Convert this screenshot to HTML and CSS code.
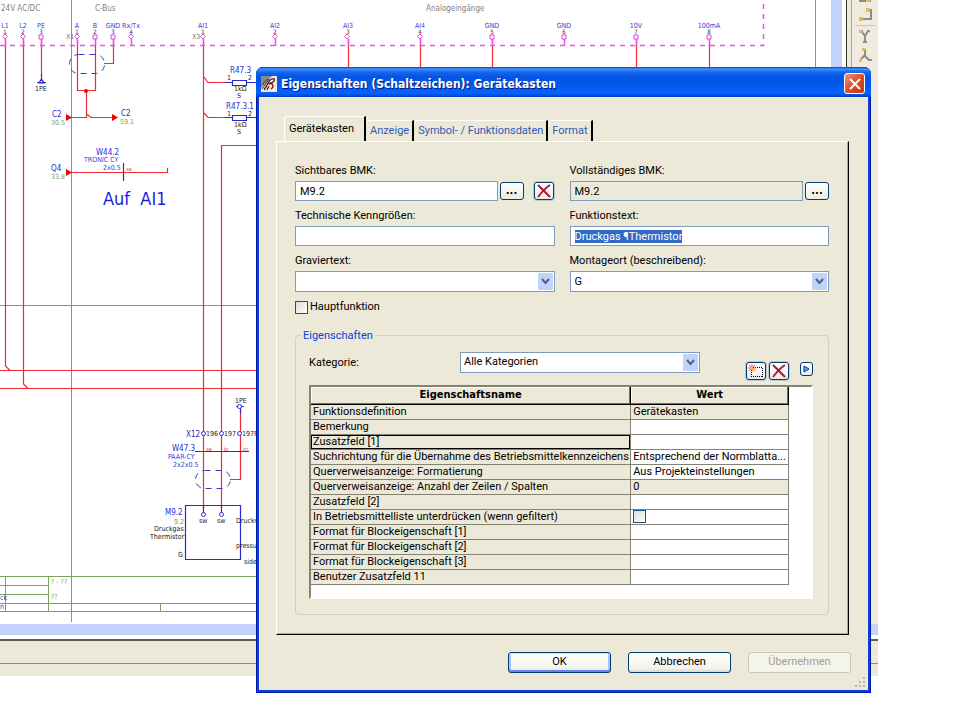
FILE: index.html
```
<!DOCTYPE html>
<html lang="de">
<head>
  <meta charset="UTF-8" />
  <meta name="viewport" content="width=device-width, initial-scale=1" />
  <title>Eigenschaften (Schaltzeichen): Gerätekasten</title>
  <link rel="stylesheet" href="styles.css">
</head>
<body>
  <div class="app">
    <div class="workspace">
      <svg class="schematic" width="831" height="624" viewBox="0 0 831 624">
        <!-- sheet frame and grid -->
        <path class="guide" d="M71.500 0V622M0 305.500H831" />
        <path class="frame" d="M815.500 0V576M0 576.500H815M0 585.500H48M0 594.500H48M0 603.500H815M0 611.500H815M5.500 576V611M48.500 576V611M160.500 603V611" />
        <text class="t-green" x="51" y="584">? - ??</text>
        <text class="t-green" x="51" y="599">??</text>
        <text class="t-blue" x="0" y="600">ck</text>
        <text class="t-blue" x="0" y="609">n</text>

        <!-- terminal strip -->
        <path class="strip" d="M0 45.500H763.500V0" />
        <g class="t-grey">
          <text x="1" y="11">24V AC/DC</text>
          <text x="95" y="11">C-Bus</text>
          <text x="426" y="11">Analogeingänge</text>
        </g>
        <g class="t-name">
          <text x="5" y="28">L1</text><text x="23" y="28">L2</text><text x="41" y="28">PE</text>
          <text x="77" y="28">A</text><text x="95" y="28">B</text><text x="113" y="28">GND</text><text x="131" y="28">Rx/Tx</text>
          <text x="203" y="28">AI1</text><text x="275" y="28">AI2</text><text x="348" y="28">AI3</text><text x="420" y="28">AI4</text>
          <text x="492" y="28">GND</text><text x="564" y="28">GND</text><text x="636" y="28">10V</text><text x="709" y="28">100mA</text>
        </g>
        <g class="t-no">
          <text x="5" y="34">1</text><text x="23" y="34">2</text><text x="41" y="34">3</text>
          <text x="77" y="34">1</text><text x="95" y="34">2</text><text x="113" y="34">3</text><text x="131" y="34">4</text>
          <text x="203" y="34">1</text><text x="275" y="34">2</text><text x="348" y="34">3</text><text x="420" y="34">4</text>
          <text x="492" y="34">5</text><text x="564" y="34">6</text><text x="636" y="34">7</text><text x="709" y="34">8</text>
        </g>
        <g class="t-strip">
          <text x="66" y="39">X1</text>
          <text x="192" y="39">X3</text>
        </g>

        <!-- wires -->
        <path class="wire" d="M5.500 39V366L10 370.500M0 370.500H831M23.500 39V384L28 388.500M0 388.500H831M41.500 39V75M77.500 39V91M95.500 39V91M77 90.500H96M86.500 90V117.500H66M86.500 114L91 117.500H113M113.500 39V63.500H104M67 172.500H167.500V168M203.500 39V508M204 77L208 82.500H229M204 113L208 117.500H229M221.500 508V145.500H270M348.500 39V70M420.500 39V70M492.500 39V70M636.500 39V70M709.500 39V70M240.500 410V479.500H230" />
        <path class="pin" d="M5.500 39V46M23.500 39V46M41.500 39V46M77.500 39V46M95.500 39V46M113.500 39V46M131.500 39V46M203.500 39V46M275.500 39V46M348.500 39V46M420.500 39V46M492.500 39V46M564.500 39V46M636.500 39V46M709.500 39V46" />
        <path class="pin-head" d="M5 34l2.500 2.500-2.500 2.500-2.500-2.500zM23 34l2.500 2.500-2.500 2.500-2.500-2.500zM39 35h4v4h-4zM77 34l2.500 2.500-2.500 2.500-2.500-2.500zM93 35h4v4h-4zM111 35h4v4h-4zM131 34l2.500 2.500-2.500 2.500-2.500-2.500zM203 34l2.500 2.500-2.500 2.500-2.500-2.500zM275 34l2.500 2.500-2.500 2.500-2.500-2.500zM347 34l2.500 2.500-2.500 2.500-2.500-2.500zM420 34l2.500 2.500-2.500 2.500-2.500-2.500zM490 35h4v4h-4zM562 35h4v4h-4zM634 35h4v4h-4zM707 35h4v4h-4z" />
        <path class="arrow" d="M66 114v7l6-3.500zM112 114v7l6-3.500zM66 169v7l6-3.500z" />
        <circle class="arrow" cx="86" cy="91" r="2" />

        <!-- shielded cables -->
        <rect class="shield" x="69.500" y="54.500" width="35" height="19" rx="9" />
        <rect class="shield" x="195.500" y="470.500" width="35" height="18" rx="9" />

        <!-- devices -->
        <path class="device" d="M41.500 74V81M37 82.500H46M39 83l2.500-4 2.500 4zM123.500 163V181M225 82.500H232M225 117.500H232M247 82.500H256M247 117.500H256M232.500 80.500h14v5h-14zM232.500 115.500h14v5h-14zM185.500 505.500h55v54h-55zM195 451.500H249M203.500 505V513M221.500 505V513M240.500 406V414M236 406.500H244" />
        <g class="node">
          <circle cx="203.500" cy="433.500" r="2" /><circle cx="221.500" cy="433.500" r="2" /><circle cx="239.500" cy="433.500" r="2" />
          <circle cx="203.500" cy="514.500" r="2" /><circle cx="221.500" cy="514.500" r="2" /><circle cx="239.500" cy="406.500" r="2" />
        </g>

        <g class="t-label">
          <text x="52" y="117">C2</text><text x="121" y="116">C2</text><text x="51" y="171">Q4</text>
          <text x="96" y="155">W44.2</text><text x="230" y="73">R47.3</text><text x="226" y="109">R47.3.1</text>
          <text x="172" y="451">W47.3</text><text x="186" y="437">X12</text><text x="165" y="515">M9.2</text>
        </g>
        <g class="t-green">
          <text x="51" y="125">30.5</text><text x="120" y="124">59.1</text><text x="51" y="179">33.8</text><text x="174" y="524">9.2</text>
        </g>
        <g class="t-blue">
          <text x="84" y="162">TRONIC CY</text><text x="103" y="170">2x0.5</text>
          <text x="168" y="459">PAAR-CY</text><text x="173" y="467">2x2x0.5</text>
        </g>
        <g class="t-red">
          <text x="126" y="171">sw</text><text x="206" y="451">sw</text><text x="224" y="451">br</text><text x="243" y="451">sh</text>
        </g>
        <g class="t-black">
          <text x="35" y="91">1PE</text><text x="235" y="403">1PE</text>
          <text x="227" y="80">1</text><text x="248" y="80">2</text><text x="227" y="116">1</text><text x="248" y="116">2</text>
          <text x="234" y="91">1kΩ</text><text x="237" y="98">S</text><text x="234" y="127">1kΩ</text><text x="237" y="134">S</text>
          <text x="206" y="436">196</text><text x="224" y="436">197</text><text x="242" y="436">197PE</text>
          <text x="199" y="523">sw</text><text x="217" y="523">sw</text>
          <text x="154" y="531">Druckgas</text><text x="150" y="539">Thermistor</text><text x="178" y="557">G</text>
          <text x="236" y="523">Drucks</text><text x="236" y="548">pressure</text><text x="244" y="564">side</text>
        </g>
        <text class="t-big" x="103" y="205" xml:space="preserve">Auf  AI1</text>
      </svg>
      <div class="scroll-v"></div>
      <div class="toolbar">
        <svg width="20" height="68" viewBox="0 0 20 68">
          <path class="tool-line" d="M4 1h12M8 19h8V10M12 10h5M4 31h4M7 32l3 4v6M15 31h-2l-3 5M8 42h4M7 50h3v6l4 4h3M10 55l-4 4" />
          <path class="tool-sep" d="M0 25.500h20" />
          <path class="tool-dot" d="M4 17h4v4h-4zM11 8h4v4h-4zM4 30h3v3h-3zM7 48h3v3h-3zM4 59h3v3h-3zM11 0h4v2h-4z" />
        </svg>
      </div>
    </div>
    <div class="scroll-h"></div>
    <div class="panel"></div>
    <div class="statusbar"></div>
  </div>

  <div class="dialog" role="dialog" aria-labelledby="title">
    <div class="titlebar">
      <svg class="app-icon" width="16" height="16" viewBox="0 0 16 16">
        <rect width="16" height="16" fill="#e9e4e2" />
        <path d="M0 0h11L0 12z" fill="#8a8a8a" />
        <path d="M2 15L9 4M9 5c4-3 6 0 3 2l-3 1c4 0 4 4 1 5M6 14l2-4" fill="none" stroke="#fff" stroke-width="3" />
        <path d="M1 13L8 3M2 9c1-4 4-6 6-5" fill="none" stroke="#333" />
        <path d="M3 14L9 4M9 4c4-3 6 0 3 2l-4 2c5-1 5 3 2 5M6 14l2-4" fill="none" stroke="#6d2222" stroke-width="1.500" />
      </svg>
      <h1 id="title">Eigenschaften (Schaltzeichen): Gerätekasten</h1>
      <button class="close" aria-label="Schließen">
        <svg width="12" height="12" viewBox="0 0 12 12"><path d="M1 1l10 10M11 1L1 11" stroke="#fff" stroke-width="2" /></svg>
      </button>
    </div>

    <div class="content">
      <div class="tabs" role="tablist">
        <button class="tab active" role="tab" aria-selected="true">Gerätekasten</button>
        <button class="tab" role="tab">Anzeige</button>
        <button class="tab" role="tab">Symbol- / Funktionsdaten</button>
        <button class="tab" role="tab">Format</button>
      </div>

      <div class="page">
        <div class="fields">
          <div class="field">
            <label for="bmk">Sichtbares BMK:</label>
            <div class="row">
              <input type="text" id="bmk" value="M9.2" />
              <button class="more" aria-label="Auswählen">...</button>
              <button class="tool" aria-label="Löschen">
                <svg width="16" height="14" viewBox="0 0 16 14"><path d="M2 1l12 12M14 1C9 4 5 9 2 13" fill="none" stroke="#b5123a" stroke-width="2" /></svg>
              </button>
            </div>
          </div>
          <div class="field">
            <label for="fullbmk">Vollständiges BMK:</label>
            <div class="row">
              <input type="text" id="fullbmk" class="readonly" value="M9.2" readonly />
              <button class="more" aria-label="Auswählen">...</button>
            </div>
          </div>
          <div class="field">
            <label for="tech">Technische Kenngrößen:</label>
            <input type="text" id="tech" />
          </div>
          <div class="field">
            <label for="func">Funktionstext:</label>
            <input type="text" id="func" value="Druckgas ¶Thermistor" autofocus />
          </div>
          <div class="field">
            <label for="engrave">Graviertext:</label>
            <select id="engrave"><option></option></select>
          </div>
          <div class="field">
            <label for="place">Montageort (beschreibend):</label>
            <select id="place"><option>G</option></select>
          </div>
        </div>
        <label class="check"><input type="checkbox" /> Hauptfunktion</label>

        <fieldset>
          <legend>Eigenschaften</legend>
          <div class="category">
            <label for="category">Kategorie:</label>
            <select id="category"><option>Alle Kategorien</option></select>
            <div class="actions">
              <button class="tool" aria-label="Neu">
                <svg width="16" height="14" viewBox="0 0 16 14">
                  <path d="M3 3.500h12M3 12.500h12M3.500 4v9M14.500 4v9" fill="none" stroke="#000" stroke-dasharray="1 1" />
                  <path d="M4 0v8M0 4h8M1 1l6 6M7 1L1 7" stroke="#f26522" />
                  <circle cx="4" cy="4" r="1" fill="#ffd23c" />
                </svg>
              </button>
              <button class="tool" aria-label="Löschen">
                <svg width="16" height="14" viewBox="0 0 16 14"><path d="M2 1l12 12M14 1C9 4 5 9 2 13" fill="none" stroke="#b5123a" stroke-width="2" /></svg>
              </button>
              <button class="expand" aria-label="Mehr">
                <svg width="7" height="8" viewBox="0 0 7 8"><path d="M1 1v6l5-3z" fill="#6aa5ff" stroke="#0d2f9c" /></svg>
              </button>
            </div>
          </div>
          <div class="list">
            <table>
              <thead>
                <tr><th class="name">Eigenschaftsname</th><th>Wert</th></tr>
              </thead>
              <tbody>
                <tr><td>Funktionsdefinition</td><td class="fixed">Gerätekasten</td></tr>
                <tr><td>Bemerkung</td><td></td></tr>
                <tr><td class="current">Zusatzfeld [1]</td><td></td></tr>
                <tr><td>Suchrichtung für die Übernahme des Betriebsmittelkennzeichens</td><td>Entsprechend der Normblatta...</td></tr>
                <tr><td>Querverweisanzeige: Formatierung</td><td>Aus Projekteinstellungen</td></tr>
                <tr><td>Querverweisanzeige: Anzahl der Zeilen / Spalten</td><td class="fixed">0</td></tr>
                <tr><td>Zusatzfeld [2]</td><td></td></tr>
                <tr><td><label for="hide">In Betriebsmittelliste unterdrücken (wenn gefiltert)</label></td><td><input type="checkbox" id="hide" /></td></tr>
                <tr><td>Format für Blockeigenschaft [1]</td><td></td></tr>
                <tr><td>Format für Blockeigenschaft [2]</td><td></td></tr>
                <tr><td>Format für Blockeigenschaft [3]</td><td></td></tr>
                <tr><td>Benutzer Zusatzfeld 11</td><td></td></tr>
              </tbody>
            </table>
          </div>
        </fieldset>
      </div>

      <div class="buttons">
        <button class="btn default">OK</button>
        <button class="btn">Abbrechen</button>
        <button class="btn" disabled>Übernehmen</button>
      </div>
      <svg class="grip" width="12" height="12" viewBox="0 0 12 12">
        <path d="M9 1h2v2h-2zM5 5h2v2h-2zM9 5h2v2h-2zM1 9h2v2h-2zM5 9h2v2h-2zM9 9h2v2h-2z" />
      </svg>
    </div>
  </div>

  <script>
    document.getElementById("func").select();
  </script>
</body>
</html>
```
FILE: styles.css
```
:root {
  --face: #ece9d8;
  --border: #7f9db9;
  --navy: #003c74;
  --link: #2f5bb7;
  --bold-font: "DejaVu Sans Condensed", "DejaVu Sans", sans-serif;
}

* {
  box-sizing: border-box;
}

body {
  margin: 0;
  background: #fff;
  font-family: Roboto, "DejaVu Sans Condensed", sans-serif;
  font-size: 11px;
  line-height: 14px;
  color: #000;
  position: relative;
  min-height: 100vh;
  overflow: hidden;
}

input, select, button {
  font: inherit;
  color: inherit;
  margin: 0;
}

/* editor behind the dialog */
.app {
  margin-right: 82px;
}

.workspace {
  display: flex;
  height: 624px;
}

.schematic {
  flex: 1;
  min-width: 0;
  display: block;
  font-family: "DejaVu Sans Condensed", "DejaVu Sans", sans-serif;
}

.schematic path, .schematic rect, .schematic circle {
  fill: none;
}

.schematic .guide { stroke: #8d8d8d; }
.schematic .frame { stroke: #7da35a; }
.schematic .strip { stroke: #e35be3; stroke-width: 1.5; stroke-dasharray: 5 5; }
.schematic .wire { stroke: #ee2a34; stroke-width: 1.2; }
.schematic .pin { stroke: #f04cf0; stroke-width: 1.5; }
.schematic .pin-head { stroke: #e83ce8; fill: #fff; }
.schematic .arrow { fill: #f00000; }
.schematic .shield { stroke: #3a3ab8; stroke-dasharray: 6 5; }
.schematic .device { stroke: #2a2ad4; stroke-width: 1.2; }
.schematic .node circle { stroke: #2a2ad4; fill: #fff; }

.schematic text { font-size: 7px; }
.schematic .t-grey text { font-size: 8px; fill: #808080; }
.schematic .t-strip text { fill: #777; }
.schematic .t-name text { fill: #3a3ae0; text-anchor: middle; }
.schematic .t-no text { fill: #333; text-anchor: middle; font-size: 6px; }
.schematic .t-label text { fill: #2a2ad4; font-size: 8px; }
.schematic .t-green, .schematic .t-green text { fill: #7f9c5c; }
.schematic .t-blue, .schematic .t-blue text { fill: #3a3ae0; }
.schematic .t-red text { fill: #d03030; font-size: 5px; }
.schematic .t-black text { fill: #222; }
.schematic .t-big { fill: #1c1ce0; font-size: 18px; }

.scroll-v {
  width: 21px;
  background: linear-gradient(to right, #c3d3fb 0 11px, #fff 11px 15px, #333 15px 16px, var(--face) 16px 20px, #aca899 20px);
}

.toolbar {
  width: 26px;
  padding-left: 3px;
  background: #efecdf;
}

.tool-line { fill: none; stroke: #8c8c88; stroke-width: 2; }
.tool-sep { stroke: #c9c5b4; }
.tool-dot { fill: #e5b76a; }

.scroll-h {
  height: 17px;
  background: linear-gradient(#c3d3fb 0 11px, #fff 11px 15px, #5f5a4c 15px 17px);
}

.panel {
  height: 23px;
  background: var(--face);
  border-bottom: 1px solid #8f8b7c;
}

.statusbar {
  height: 12px;
  background: var(--face);
}

/* dialog window */
.dialog {
  position: absolute;
  top: 67px;
  left: 256px;
  right: 89px;
  background: #0a3fd8;
  padding: 0 3px 3px;
  border-radius: 7px 7px 0 0;
  box-shadow: inset 0 0 0 1px #0019a8;
}

.titlebar {
  height: 30px;
  display: flex;
  align-items: center;
  gap: 4px;
  margin: 0 -3px;
  padding: 3px 6px 0 5px;
  border-radius: 7px 7px 0 0;
  background: linear-gradient(#0a3ea8 0, #3f94ff 2px, #1567ee 5px, #0454e2 10px, #0259ee 19px, #0564ff 26px, #0340c4 30px);
}

.titlebar h1 {
  flex: 1;
  margin: 0;
  font-family: var(--bold-font);
  font-size: 12px;
  font-weight: bold;
  color: #fff;
  text-shadow: 1px 1px #0a1883;
}

.close {
  width: 21px;
  height: 21px;
  padding: 0;
  display: grid;
  place-items: center;
  border: 1px solid #fff;
  border-radius: 3px;
  background: linear-gradient(135deg, #eb9a81, #dc4f28 50%, #c03c13);
}

.content {
  position: relative;
  background: var(--face);
  padding: 19px 19px 17px 17px;
}

.tabs {
  display: flex;
  align-items: flex-end;
  padding-left: 8px;
}

.tab {
  height: 21px;
  padding: 0 3px 0 4px;
  border: solid #fff;
  border-width: 1px 0 0;
  border-right: 2px solid #000;
  border-radius: 3px 0 0 0;
  background: none;
  color: var(--link);
}

.tab.active {
  height: 25px;
  padding: 0 10px 0 4px;
  border-left: 1px solid #fff;
  color: #000;
}

.page {
  padding: 22px 19px 19px 18px;
  border: 1px solid #fff;
  border-right-color: #000;
  border-bottom-color: #000;
  box-shadow: inset -1px -1px #aca899;
}

.fields {
  display: grid;
  grid-template-columns: 1fr 1fr;
  column-gap: 15px;
  row-gap: 8px;
}

.field {
  display: flex;
  flex-direction: column;
  gap: 3px;
}

.row {
  display: flex;
  align-items: center;
  gap: 2px;
}

input[type="text"] {
  width: 100%;
  min-width: 0;
  height: 20px;
  padding: 0 4px;
  border: 1px solid var(--border);
  background: #fff;
  outline: none;
}

.row input[type="text"] {
  flex: 1;
}

input.readonly {
  background: var(--face);
}

input::selection {
  background: #316ac5;
  color: #fff;
}

select {
  width: 100%;
  height: 21px;
  padding: 0 20px 0 4px;
  border: 1px solid var(--border);
  border-radius: 0;
  appearance: none;
  background: #fff url("data:image/svg+xml,%3Csvg xmlns='http://www.w3.org/2000/svg' width='15' height='17'%3E%3Crect width='15' height='17' rx='1' fill='%23c1d2fb'/%3E%3Cpath d='M4 6l3.500 4L11 6' fill='none' stroke='%234d6185' stroke-width='2'/%3E%3C/svg%3E") no-repeat right 1px center;
}

.more, .tool, .expand {
  flex: none;
  height: 18px;
  padding: 0;
  border: 1px solid var(--navy);
  border-radius: 3px;
  background: linear-gradient(#fff, #ecebe5);
}

.more {
  width: 24px;
  font-family: var(--bold-font);
  font-weight: bold;
}

.tool {
  width: 20px;
  display: grid;
  place-items: center;
  box-shadow: 0 0 0 1px #b9c7cf;
}

.row .tool {
  margin: 0 1px 0 8px;
}

.expand {
  width: 13px;
  height: 14px;
  display: grid;
  place-items: center;
}

input[type="checkbox"] {
  appearance: none;
  width: 13px;
  height: 13px;
  border: 1px solid #1c5180;
  background: linear-gradient(135deg, #dcdcd7, #fff);
}

.check {
  display: inline-flex;
  align-items: center;
  gap: 2px;
  margin-top: 8px;
}

fieldset {
  min-width: 0;
  margin: 11px 0 0;
  padding: 9px 15px 15px 13px;
  border: 1px solid #d0d0bf;
  border-radius: 4px;
}

legend {
  margin-left: -8px;
  padding: 0 2px;
  color: #0046d5;
}

.category {
  display: flex;
  align-items: flex-start;
  height: 33px;
}

.category label {
  width: 151px;
  padding-top: 4px;
}

.category select {
  width: 240px;
  padding-left: 3px;
}

.actions {
  display: flex;
  gap: 3px;
  margin: 10px 0 0 auto;
}

.expand {
  margin-left: 8px;
}

.list {
  padding-bottom: 12px;
  background: #fff;
  border: 2px solid;
  border-color: #848273 #fff #fff #848273;
}

table {
  width: calc(100% - 22px);
  table-layout: fixed;
  border-collapse: separate;
  border-spacing: 0;
}

th {
  height: 18px;
  padding: 0;
  background: var(--face);
  border: solid #000;
  border-width: 0 1px 1px 0;
  box-shadow: inset -1px -1px #716f64, inset 1px 1px #fff;
  font-family: var(--bold-font);
  font-weight: bold;
}

.name {
  width: 67%;
}

td {
  height: 15px;
  padding: 0 2px;
  line-height: 14px;
  white-space: nowrap;
  overflow: hidden;
  border: solid #848273;
  border-width: 0 1px 1px 0;
}

td:first-child, td.fixed {
  background: var(--face);
}

td.current {
  box-shadow: inset 0 0 0 1px #000;
}

td input[type="checkbox"] {
  display: block;
}

.buttons {
  display: flex;
  justify-content: flex-end;
  gap: 17px;
  margin: 17px -2px 0 0;
}

.btn {
  width: 103px;
  height: 21px;
  padding: 0;
  border: 1px solid var(--navy);
  border-radius: 3px;
  background: linear-gradient(#fff, #f3f3ee 80%, #dcd8cc);
}

.btn.default {
  box-shadow: inset 0 1px #cee7ff, inset 0 -2px #6982ee, inset 2px 0 #a9c4f5, inset -2px 0 #a9c4f5;
}

.btn:disabled {
  color: #a1a192;
  border-color: #c9c7ba;
  background: #f5f4ea;
}

.grip {
  position: absolute;
  right: 2px;
  bottom: 2px;
  fill: #b8b4a2;
}
```
